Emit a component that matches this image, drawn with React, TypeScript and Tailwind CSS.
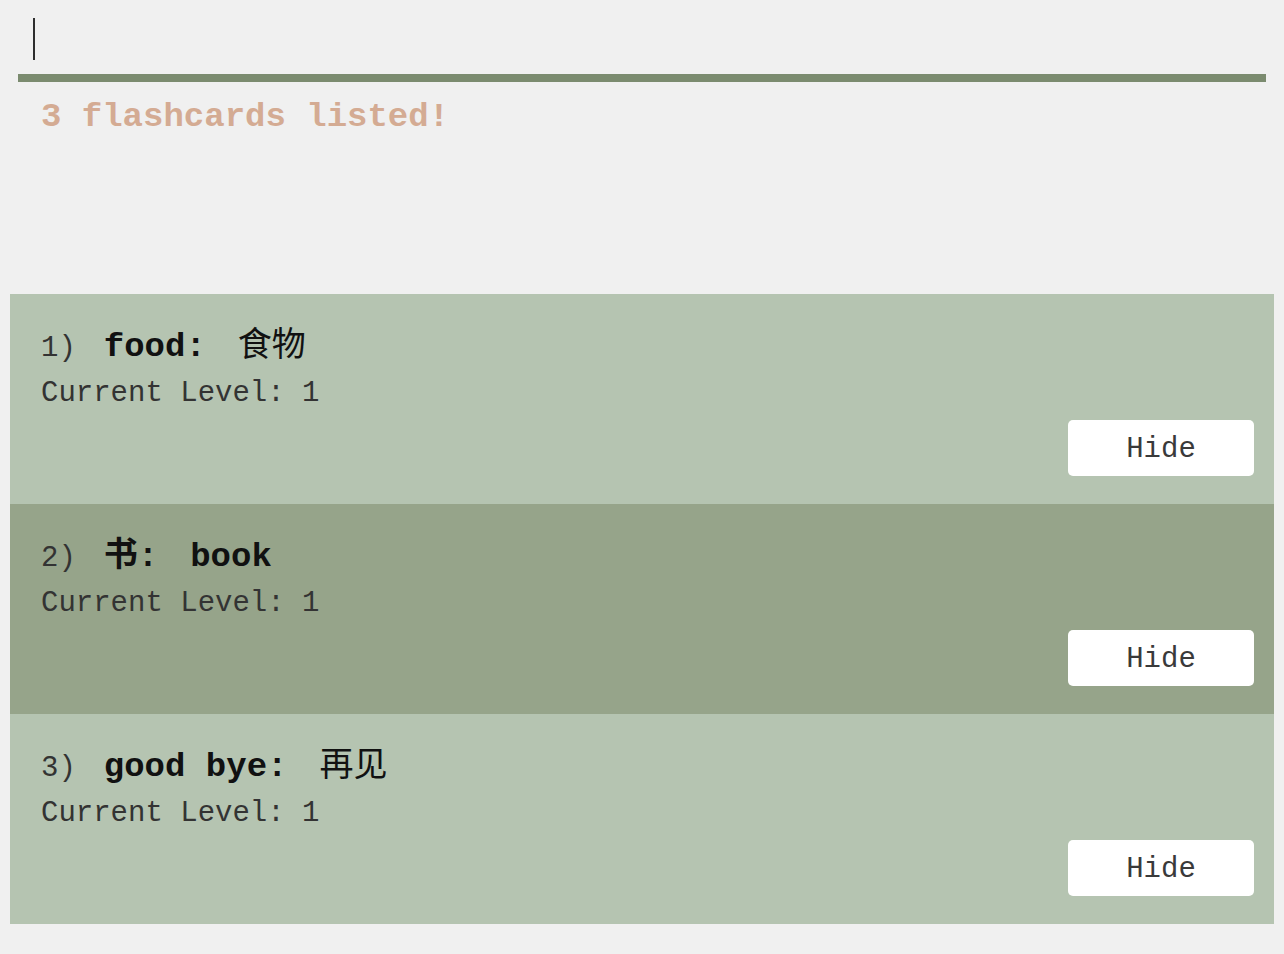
import React from 'react'

type Card = {
  id: number
  term: string
  meaning: string
  termCjk: boolean
  level: number
}

const cards: Card[] = [
  { id: 1, term: 'food:', meaning: '食物', termCjk: false, level: 1 },
  { id: 2, term: '书:', meaning: 'book', termCjk: true, level: 1 },
  { id: 3, term: 'good bye:', meaning: '再见', termCjk: false, level: 1 },
]

const mono = "font-['Courier_New','Liberation_Mono','Noto_Sans_CJK_SC',monospace]"

function FlashcardRow({ card, index }: { card: Card; index: number }) {
  const shade = index % 2 === 1 ? 'bg-[#96a48a]' : 'bg-[#b5c4b1]'
  return (
    <div className={`h-[210px] flex flex-col pl-[31px] pr-[20px] ${shade}`}>
      {/* Question / answer line */}
      <div className="pt-[33px] flex items-baseline leading-[40px] text-[#111]">
        <span className="text-[29px] text-[#333]">{index + 1})</span>
        <span className="ml-[28px] text-[34px] font-bold">{card.term}</span>
        <span className={`ml-[32px] text-[34px] ${card.termCjk ? 'font-bold' : ''}`}>{card.meaning}</span>
      </div>
      <div className="mt-[7px] text-[29px] leading-[36px] text-[#333]">Current Level: {card.level}</div>
      <div className="mt-[8px] flex justify-end">
        <button className="w-[186px] h-[56px] pt-[4px] rounded-[5px] bg-white text-[29px] text-[#3a3a3a]">Hide</button>
      </div>
    </div>
  )
}

export default function App() {
  return (
    <div className={`min-h-screen bg-[#f0f0f0] ${mono}`}>
      {/* Command box */}
      <div className="px-[18px] pt-[18px]">
        <div className="h-[42px] pl-[15px]">
          <div className="w-[2px] h-[42px] bg-[#2e2e2e]" />
        </div>
        <div className="mt-[14px] h-[8px] bg-[#7b8b6f]" />
        {/* Result display */}
        <div className="h-[212px] pt-[15px] pl-[23px]">
          <div className="text-[34px] leading-[40px] font-bold text-[#d4ab93]">3 flashcards listed!</div>
        </div>
      </div>

      <div className="px-[10px] pb-[30px]">
        {cards.map((c, i) => (
          <FlashcardRow key={c.id} card={c} index={i} />
        ))}
      </div>
    </div>
  )
}
